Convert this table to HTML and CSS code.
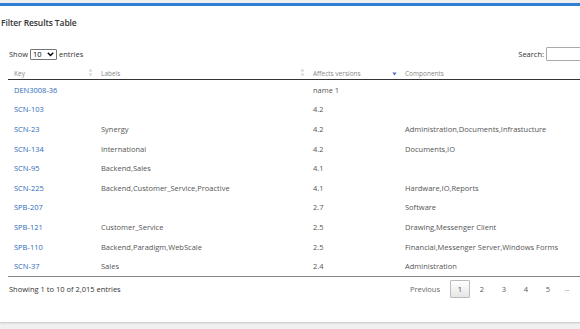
FILE: index.html
```html
<!DOCTYPE html>
<html>
<head>
<meta charset="utf-8">
<link rel="stylesheet" href="styles.css">
</head>
<body>
<div class="card">
  <div class="card-title">Filter Results Table</div>
  <div class="dt">
    <div class="dt-top">
      <label class="dt-length">Show <span class="select">10 <svg width="7" height="5" viewBox="0 0 7 5"><path d="M0.8 0.8 L3.5 3.6 L6.2 0.8" fill="none" stroke="#000" stroke-width="1.4"/></svg></span> entries</label>
      <label class="dt-search">Search: <span class="input"></span></label>
    </div>
    <table>
      <thead>
        <tr>
          <th class="c-key">Key<span class="sort"><svg width="5" height="9" viewBox="0 0 5 9"><path d="M2.5 0.5 L4.5 3.5 L0.5 3.5Z M2.5 8.5 L4.5 5.5 L0.5 5.5Z" fill="#d6d6d6"/></svg></span></th>
          <th class="c-labels">Labels<span class="sort"><svg width="5" height="9" viewBox="0 0 5 9"><path d="M2.5 0.5 L4.5 3.5 L0.5 3.5Z M2.5 8.5 L4.5 5.5 L0.5 5.5Z" fill="#d6d6d6"/></svg></span></th>
          <th class="c-aff">Affects versions<span class="sort"><svg width="5" height="9" viewBox="0 0 5 9"><path d="M0.3 4.5 L4.7 4.5 L2.5 7.5Z" fill="#5a6fc8"/></svg></span></th>
          <th class="c-comp">Components</th>
        </tr>
      </thead>
      <tbody>
        <tr><td><a>DEN3008-36</a></td><td></td><td>name 1</td><td></td></tr>
        <tr><td><a>SCN-103</a></td><td></td><td>4.2</td><td></td></tr>
        <tr><td><a>SCN-23</a></td><td>Synergy</td><td>4.2</td><td>Administration,Documents,Infrastucture</td></tr>
        <tr><td><a>SCN-134</a></td><td>International</td><td>4.2</td><td>Documents,IO</td></tr>
        <tr><td><a>SCN-95</a></td><td>Backend,Sales</td><td>4.1</td><td></td></tr>
        <tr><td><a>SCN-225</a></td><td>Backend,Customer_Service,Proactive</td><td>4.1</td><td>Hardware,IO,Reports</td></tr>
        <tr><td><a>SPB-207</a></td><td></td><td>2.7</td><td>Software</td></tr>
        <tr><td><a>SPB-121</a></td><td>Customer_Service</td><td>2.5</td><td>Drawing,Messenger Client</td></tr>
        <tr><td><a>SPB-110</a></td><td>Backend,Paradigm,WebScale</td><td>2.5</td><td>Financial,Messenger Server,Windows Forms</td></tr>
        <tr><td><a>SCN-37</a></td><td>Sales</td><td>2.4</td><td>Administration</td></tr>
      </tbody>
    </table>
    <div class="dt-bottom">
      <div class="dt-info">Showing 1 to 10 of 2,015 entries</div>
      <div class="pager">
        <span class="pg prev">Previous</span>
        <span class="pg current">1</span>
        <span class="pg">2</span>
        <span class="pg">3</span>
        <span class="pg">4</span>
        <span class="pg">5</span>
        <span class="pg ellipsis">...</span>
      </div>
    </div>
  </div>
</div>
</body>
</html>
```

FILE: styles.css
```css
html, body {
  margin: 0;
  padding: 0;
}
body {
  background: #f0f0f0;
  overflow: hidden;
  width: 580px;
  height: 329px;
  font-family: "Open Sans", "Noto Sans", sans-serif;
  color: #555;
}
.card {
  margin-top: 3px;
  width: 640px;
  height: 316px;
  background: #fff;
  border-top: 3px solid #2f7fd6;
  box-shadow: 0 1px 2px rgba(0,0,0,0.18);
}
.card-title {
  padding: 11px 0 0 1px;
  height: 15px;
  font-size: 8.5px;
  font-weight: 600;
  color: #333;
  letter-spacing: -0.1px;
}
.dt {
  padding: 0 0 0 8px;
  width: 610px;
}
.dt-top {
  display: flex;
  justify-content: space-between;
  align-items: center;
  margin-top: 14px;
  height: 16px;
  font-size: 7.5px;
  color: #333;
}
.dt-length {
  display: flex;
  align-items: center;
  gap: 2px;
  padding-left: 1px;
}
.select {
  display: inline-flex;
  align-items: center;
  justify-content: space-between;
  width: 21px;
  height: 9px;
  padding: 0 2px;
  border: 1px solid #767676;
  border-radius: 1px;
  font-size: 7.5px;
  color: #000;
}
.dt-search {
  display: flex;
  align-items: center;
  gap: 2px;
  margin-right: 30px;
  color: #333;
}
.input {
  display: inline-block;
  width: 40px;
  height: 12px;
  border: 1px solid #aaa;
  border-radius: 1px;
}
table {
  width: 100%;
  border-collapse: collapse;
  table-layout: fixed;
  margin-top: 1px;
}
th {
  position: relative;
  text-align: left;
  font-size: 6.5px;
  font-weight: 400;
  color: #888;
  padding: 5px 6px 0;
  height: 11px;
  border-bottom: 1.5px solid #333;
}
.sort {
  position: absolute;
  right: 2px;
  top: 5px;
  line-height: 0;
}
.c-key { width: 75px; }
.c-labels { width: 200px; }
.c-aff { width: 80px; }
td {
  font-size: 7.5px;
  color: #555;
  padding: 0 6px;
  height: 19.6px;
  white-space: nowrap;
  overflow: hidden;
}
tbody tr:last-child td {
  border-bottom: 1px solid #888;
}
a {
  color: #2e6cb8;
}
.dt-bottom {
  display: flex;
  justify-content: space-between;
  align-items: center;
  width: 566px;
  margin-top: 3px;
  font-size: 7.5px;
  color: #333;
}
.dt-info {
  padding-left: 1px;
}
.pager {
  display: flex;
  align-items: center;
}
.pg {
  display: inline-flex;
  align-items: center;
  justify-content: center;
  min-width: 20px;
  height: 18px;
  padding: 0 1px;
  color: #555;
  box-sizing: border-box;
  border: 1px solid transparent;
  margin-left: 2px;
}
.prev {
  padding: 0 5px;
  color: #666;
}
.current {
  border: 1px solid #bbb;
  border-radius: 1px;
  background: linear-gradient(#fff, #e6e6e6);
  margin-left: 4px;
  color: #444;
}
.ellipsis {
  min-width: 14px;
  font-size: 6.5px;
  color: #777;
}
```
